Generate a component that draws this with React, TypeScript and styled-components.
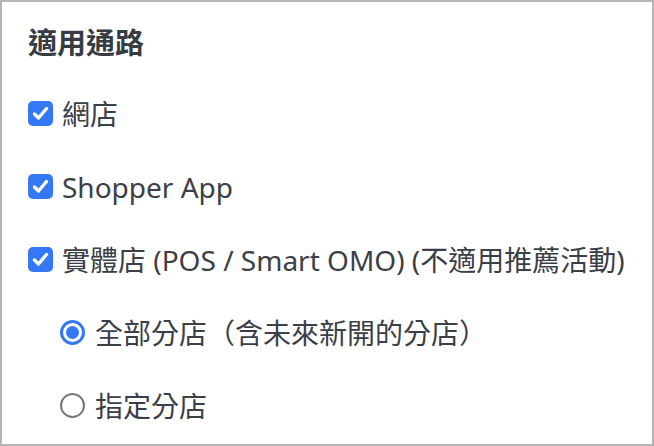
import React from "react";
import styled, { createGlobalStyle } from "styled-components";

const Global = createGlobalStyle`
  html, body { margin: 0; padding: 0; background: #ffffff; }
  * { box-sizing: border-box; }
`;

const Panel = styled.section`
  width: 654px;
  height: 446px;
  border: 2px solid #b4b4b4;
  background: #ffffff;
  padding: 19px 0 0 26px;
  font-family: "Noto Sans", "Noto Sans CJK TC", sans-serif;
  color: #3b3f47;
  overflow: hidden;
`;

const Title = styled.h2`
  margin: 0 0 16px 0;
  height: 40px;
  line-height: 40px;
  font-size: 29px;
  font-weight: 700;
  font-family: "Noto Sans CJK TC", "Noto Sans", sans-serif;
  color: #373b43;
`;

const Row = styled.label<{ $indent?: number }>`
  display: flex;
  align-items: center;
  height: 73px;
  padding-left: ${(p) => p.$indent ?? 0}px;
  font-size: 28px;
  cursor: pointer;
`;

const Label = styled.span<{ $gap: number }>`
  margin-left: ${(p) => p.$gap}px;
  white-space: nowrap;
  line-height: 40px;
`;

const CheckBox = styled.span`
  width: 25px;
  height: 25px;
  border-radius: 5px;
  background: #3478f6;
  display: flex;
  align-items: center;
  justify-content: center;
  flex: none;
`;

const Radio = styled.span<{ $checked?: boolean }>`
  width: 25px;
  height: 25px;
  border-radius: 50%;
  flex: none;
  display: flex;
  align-items: center;
  justify-content: center;
  border: ${(p) => (p.$checked ? "3px solid #3478f6" : "2px solid #777777")};
  &::after {
    content: "";
    display: ${(p) => (p.$checked ? "block" : "none")};
    width: 13px;
    height: 13px;
    border-radius: 50%;
    background: #3478f6;
  }
`;

const Check = () => (
  <CheckBox>
    <svg width="19" height="19" viewBox="0 0 19 19">
      <path d="M3.5 10 L7.5 14 L15.5 4.5" fill="none" stroke="#fff" strokeWidth="3.4" strokeLinecap="round" strokeLinejoin="round" />
    </svg>
  </CheckBox>
);

export default function App() {
  return (
    <>
      <Global />
      <Panel>
        <Title>適用通路</Title>
        <Row>
          <Check />
          <Label $gap={9}>網店</Label>
        </Row>
        <Row>
          <Check />
          <Label $gap={9}>Shopper App</Label>
        </Row>
        <Row>
          <Check />
          <Label $gap={9}>實體店 (POS / Smart OMO) (不適用推薦活動)</Label>
        </Row>
        <Row $indent={32}>
          <Radio $checked />
          <Label $gap={10}>全部分店（含未來新開的分店）</Label>
        </Row>
        <Row $indent={32}>
          <Radio />
          <Label $gap={10}>指定分店</Label>
        </Row>
      </Panel>
    </>
  );
}
